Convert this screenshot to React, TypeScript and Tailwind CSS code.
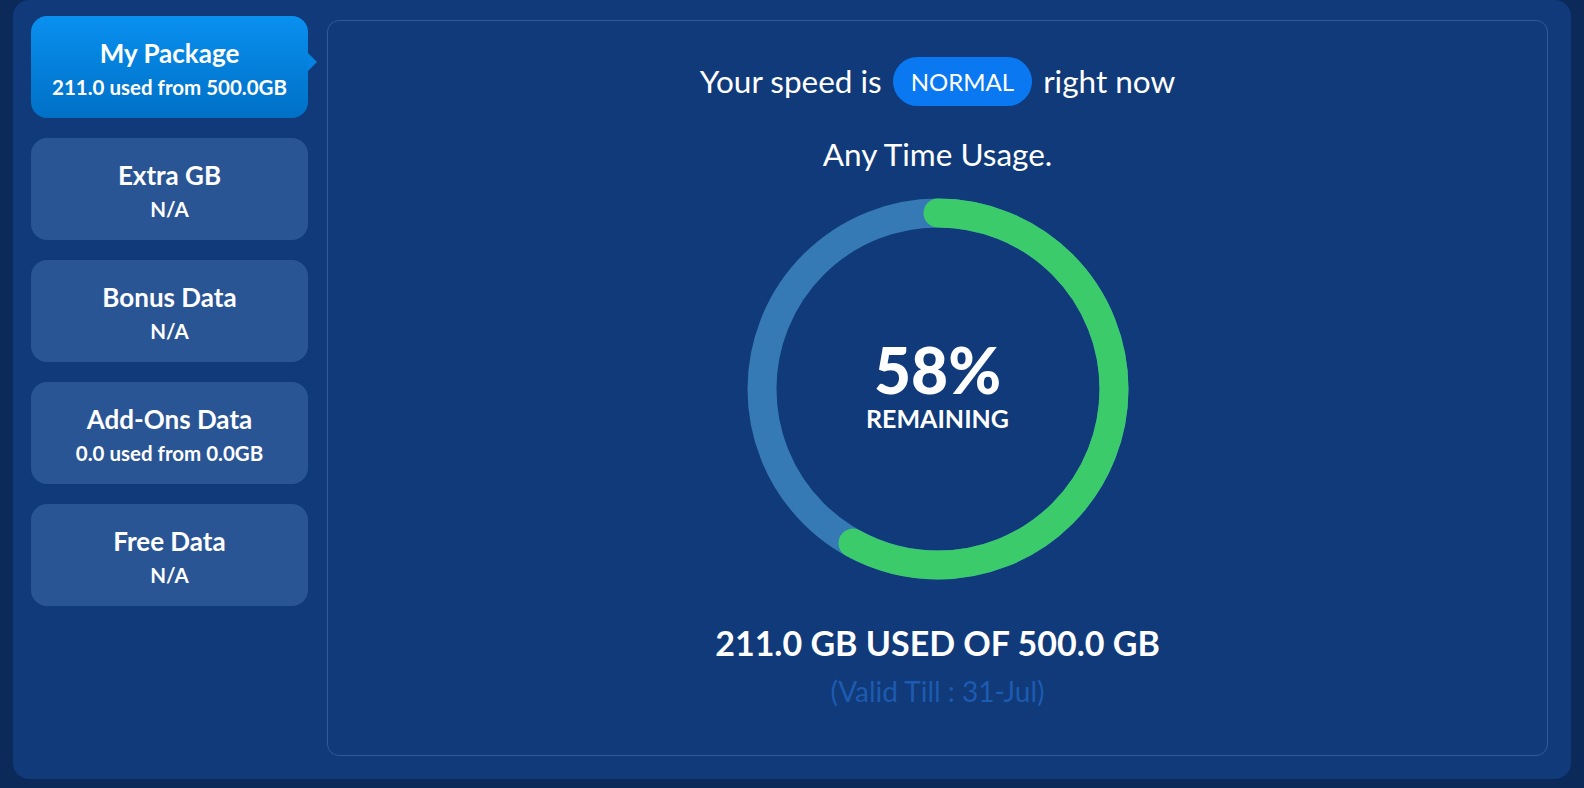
import React from 'react';

const packages = [
  { title: 'My Package', sub: '211.0 used from 500.0GB', active: true },
  { title: 'Extra GB', sub: 'N/A', active: false },
  { title: 'Bonus Data', sub: 'N/A', active: false },
  { title: 'Add-Ons Data', sub: '0.0 used from 0.0GB', active: false },
  { title: 'Free Data', sub: 'N/A', active: false },
];

const UsageRing: React.FC<{ percent: number }> = ({ percent }) => {
  const r = 176;
  const c = 2 * Math.PI * r;
  return (
    <div className="relative w-[384px] h-[384px]">
      <svg width="384" height="384" viewBox="0 0 384 384">
        <circle cx="192" cy="192" r={r} fill="none" stroke="#3579b5" strokeWidth="29" />
        <circle
          cx="192"
          cy="192"
          r={r}
          fill="none"
          stroke="#3ccb6b"
          strokeWidth="29"
          strokeLinecap="round"
          strokeDasharray={`${(c * percent) / 100} ${c}`}
          transform="rotate(-90 192 192)"
        />
      </svg>
      <div className="absolute inset-0 flex flex-col items-center justify-center text-white">
        <p className="text-[64px] font-black leading-[60px] mt-[-6px]">{percent}%</p>
        <p className="text-[25px] font-bold leading-none mt-[6px]">REMAINING</p>
      </div>
    </div>
  );
};

const App: React.FC = () => {
  return (
    <div className="w-full h-[788px] bg-[#0b2a59] px-[13px]" style={{ fontFamily: 'Lato, "Open Sans", sans-serif' }}>
      <div className="h-[779px] bg-[#103a79] rounded-2xl flex pl-[18px] pr-[23px] pt-[16px]">
        <aside className="w-[277px] flex flex-col gap-[20px] shrink-0">
          {packages.map((p) => (
            <div
              key={p.title}
              className={`relative h-[102px] rounded-2xl flex flex-col items-center justify-center pt-[3px] text-white ${
                p.active ? 'bg-gradient-to-b from-[#0a90f0] to-[#0070c6]' : 'bg-[#2a5595]'
              }`}
            >
              <p className="text-[26px] font-bold leading-none">{p.title}</p>
              <p className="text-[20.5px] font-bold leading-none mt-[11px]">{p.sub}</p>
              {p.active && (
                <span className="absolute right-[-9px] top-[36px] w-0 h-0 border-y-[10px] border-y-transparent border-l-[10px] border-l-[#0682e0]" />
              )}
            </div>
          ))}
        </aside>
        <main className="ml-[19px] mt-[4px] h-[736px] flex-1 rounded-xl border border-[#2f5b9c] flex flex-col items-center text-white">
          <div className="flex items-center mt-[36px] text-[31.5px] leading-none">
            <span>Your speed is</span>
            <span className="mx-[11px] h-[49px] px-[18px] rounded-full bg-[#0a78f0] text-[24px] flex items-center">NORMAL</span>
            <span>right now</span>
          </div>
          <p className="text-[31.5px] leading-none mt-[33px]">Any Time Usage.</p>
          <div className="mt-[26px]">
            <UsageRing percent={58} />
          </div>
          <p className="text-[34px] font-bold leading-none mt-[45px]">211.0 GB USED OF 500.0 GB</p>
          <p className="text-[28px] leading-none mt-[17px] text-[#1d5bb0]">(Valid Till : 31-Jul)</p>
        </main>
      </div>
    </div>
  );
};

export default App;
